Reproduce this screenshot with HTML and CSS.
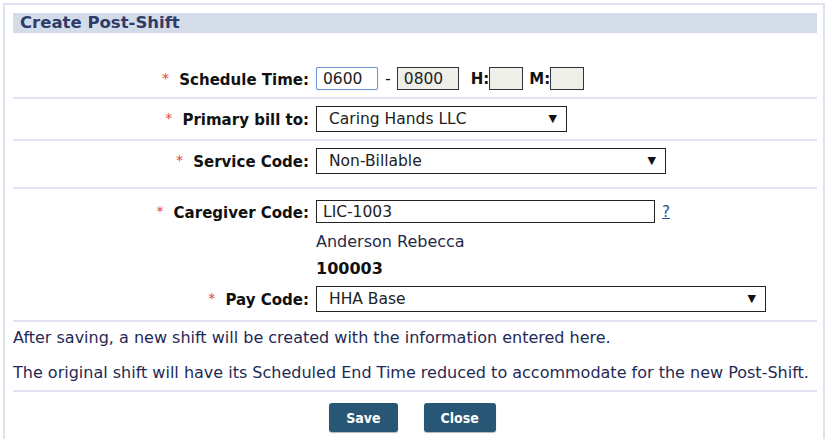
FILE: index.html
```html
<!DOCTYPE html>
<html lang="en">
<head>
    <meta charset="UTF-8">
    <title>Create Post-Shift</title>
    <link rel="stylesheet" href="styles.css">
</head>
<body>
    <div class="panel">
        <div class="panel-title">Create Post-Shift</div>

        <div class="form-row first-row">
            <label class="field-label"><span class="req">*</span> Schedule Time:</label>
            <div class="field time-field">
                <input type="text" class="time-input focused" value="0600">
                <span class="dash">-</span>
                <input type="text" class="time-input readonly" value="0800" readonly>
                <span class="unit">H:</span><input type="text" class="small-input readonly" readonly>
                <span class="unit">M:</span><input type="text" class="small-input readonly" readonly>
            </div>
        </div>

        <div class="form-row">
            <label class="field-label"><span class="req">*</span> Primary bill to:</label>
            <div class="field">
                <span class="select-wrap bill-select">
                    <select><option>Caring Hands LLC</option></select>
                </span>
            </div>
        </div>

        <div class="form-row service-row">
            <label class="field-label"><span class="req">*</span> Service Code:</label>
            <div class="field">
                <span class="select-wrap service-select">
                    <select><option>Non-Billable</option></select>
                </span>
            </div>
        </div>

        <div class="form-row caregiver-row">
            <label class="field-label top"><span class="req">*</span> Caregiver Code:</label>
            <div class="field">
                <input type="text" class="code-input" value="LIC-1003">
                <a href="#" class="help">?</a>
                <div class="caregiver-name">Anderson Rebecca</div>
                <div class="caregiver-id">100003</div>
            </div>
            <label class="field-label"><span class="req">*</span> Pay Code:</label>
            <div class="field">
                <span class="select-wrap pay-select">
                    <select><option>HHA Base</option></select>
                </span>
            </div>
        </div>

        <div class="notes">
            <p>After saving, a new shift will be created with the information entered here.</p>
            <p>The original shift will have its Scheduled End Time reduced to accommodate for the new Post-Shift.</p>
        </div>

        <div class="actions">
            <button type="button">Save</button>
            <button type="button">Close</button>
        </div>
    </div>
</body>
</html>
```

FILE: styles.css
```css
body {
    margin: 0;
    font-family: "DejaVu Sans", Verdana, sans-serif;
    font-size: 16px;
    color: #111;
    background: white;
}
.panel {
    margin: 3px 0 0 3px;
    width: 804px;
    padding: 8px 6px 20px 8px;
    border: 2px solid #dde2ee;
    border-bottom: none;
}
.panel-title {
    background: #d5dce9;
    color: #2d3c6a;
    font-weight: bold;
    font-size: 16.5px;
    height: 20px;
    line-height: 20px;
    padding-left: 7px;
}
.form-row {
    display: grid;
    grid-template-columns: 296px 1fr;
    column-gap: 7px;
    align-items: center;
    padding: 7px 0;
    border-bottom: 2px solid #dfe4ef;
}
.first-row {
    padding-top: 34px;
}
.service-row {
    padding-bottom: 13px;
}
.field-label {
    text-align: right;
    font-weight: bold;
    font-size: 15px;
    line-height: 18px;
    color: #111;
    white-space: nowrap;
}
.field-label.top {
    align-self: start;
    padding-top: 2px;
}
.req {
    color: #e8413c;
    font-weight: normal;
    font-size: 14px;
    vertical-align: 2px;
    margin-right: 5px;
}
.field {
    display: flex;
    align-items: center;
    flex-wrap: wrap;
}
input, select {
    font-family: "DejaVu Sans", Verdana, sans-serif;
    font-size: 15.5px;
    color: #222;
    box-sizing: border-box;
}
.time-input {
    width: 62px;
    height: 23px;
    padding: 0 6px;
    border: 1px solid #333;
    border-radius: 0;
}
.time-input.focused {
    border: 1px solid #6f94cf;
    border-radius: 2px;
    box-shadow: 0 0 1px #9bb6e2;
}
.readonly {
    background: #efefea;
}
.dash {
    margin: 0 6px 0 7px;
}
.unit {
    font-weight: bold;
    font-size: 15px;
    margin-left: 12px;
}
.small-input {
    width: 34px;
    height: 23px;
    border: 1px solid #333;
    padding: 0;
}
.small-input + .unit {
    margin-left: 6px;
}
.select-wrap {
    position: relative;
    display: inline-block;
}
.select-wrap select {
    appearance: none;
    -webkit-appearance: none;
    width: 100%;
    height: 26px;
    padding: 0 0 0 12px;
    border: 1px solid #222;
    border-radius: 0;
    background: white;
}
.select-wrap::after {
    content: "\25BC";
    position: absolute;
    right: 10px;
    top: 6px;
    font-size: 11px;
    color: #111;
    pointer-events: none;
}
.bill-select {
    width: 251px;
}
.service-select {
    width: 350px;
}
.pay-select {
    width: 450px;
}
.caregiver-row {
    padding-top: 11px;
    padding-bottom: 8px;
    row-gap: 8px;
}
.code-input {
    width: 339px;
    height: 23px;
    padding: 0 6px;
    border: 1px solid #222;
}
.help {
    margin-left: 7px;
    color: #2c4f8c;
    font-size: 15px;
}
.caregiver-name {
    width: 100%;
    margin-top: 10px;
    line-height: 18px;
    color: #1f2a4a;
}
.caregiver-id {
    width: 100%;
    margin-top: 9px;
    line-height: 18px;
    font-weight: bold;
}
.notes {
    border-bottom: 2px solid #dfe4ef;
    padding: 6px 0 7px;
}
.notes p {
    margin: 0 0 15px;
    line-height: 20px;
    color: #1f2a55;
}
.notes p:last-child {
    margin-bottom: 0;
}
.actions {
    display: flex;
    justify-content: center;
    gap: 26px;
    padding-top: 11px;
    padding-right: 5px;
}
.actions button {
    background: #275774;
    color: white;
    border: none;
    border-radius: 3px;
    font-family: "DejaVu Sans Condensed", "DejaVu Sans", sans-serif;
    font-weight: bold;
    font-size: 14px;
    height: 29px;
    padding: 0 17px;
    box-shadow: 0 1px 1px rgba(0, 0, 0, 0.3);
}
```
